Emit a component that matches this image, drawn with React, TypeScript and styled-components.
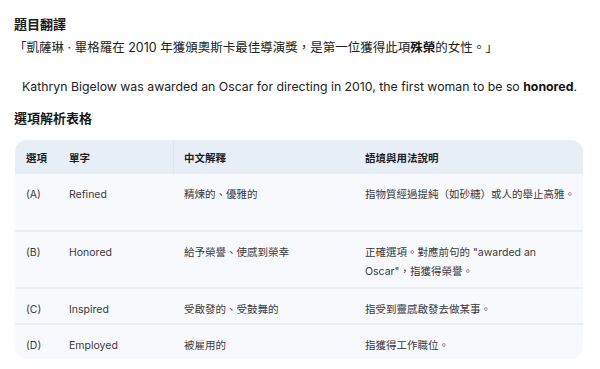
import React from "react";
import styled, { createGlobalStyle } from "styled-components";

const Global = createGlobalStyle`
  html, body { margin: 0; padding: 0; background: #ffffff; }
  body {
    font-family: Inter, "Noto Sans CJK TC", "Noto Sans", sans-serif;
    color: #1d1d1f;
    -webkit-font-smoothing: antialiased;
  }
`;

const Page = styled.div`
  width: 600px;
  height: 369px;
  box-sizing: border-box;
  padding: 15px 15px 0 14px;
  overflow: hidden;
`;

const Heading = styled.h3`
  margin: 0;
  font-size: 13px;
  line-height: 18px;
  font-weight: 700;
  color: #1a1a1a;
`;

const Para = styled.p<{ $indent?: number; $top?: number; $size: number }>`
  margin: ${(p) => p.$top ?? 0}px 0 0 ${(p) => p.$indent ?? 0}px;
  font-size: ${(p) => p.$size}px;
  line-height: 18px;
  color: #222;
  white-space: nowrap;
  b { font-weight: 700; color: #111; }
`;

const Spacer = styled.div<{ $h: number }>`
  height: ${(p) => p.$h}px;
`;

const Table = styled.div`
  margin-top: 13px;
  margin-left: 1px;
  width: 568px;
  border-radius: 12px;
  overflow: hidden;
  background: #f7f9fc;
  display: grid;
  grid-template-columns: 43px 115px 182px 228px;
  font-size: 10.5px;
  line-height: 19px;
  color: #3a3a3c;
`;

const HeadCell = styled.div<{ $divider?: boolean; $pl?: number }>`
  background: #e8eef6;
  height: 34px;
  box-sizing: border-box;
  display: flex;
  align-items: center;
  padding: 3px 0 0 ${(p) => p.$pl ?? 11}px;
  font-weight: 700;
  color: #1f1f1f;
  box-shadow: ${(p) => (p.$divider ? "inset 1px 0 0 #dfe6ef" : "none")};
`;

const Cell = styled.div<{ $h: number; $line?: boolean; $pl?: number }>`
  min-height: ${(p) => p.$h}px;
  box-sizing: border-box;
  padding: 11px 3px 0 ${(p) => p.$pl ?? 11}px;
  border-top: ${(p) => (p.$line ? "2px solid #eaedf1" : "none")};
`;

type Row = { opt: string; word: string; zh: string; note: string; h: number };

const rows: Row[] = [
  { opt: "(A)", word: "Refined", zh: "精煉的、優雅的", note: "指物質經過提純（如砂糖）或人的舉止高雅。", h: 56 },
  { opt: "(B)", word: "Honored", zh: "給予榮譽、使感到榮幸", note: "正確選項。對應前句的 \"awarded an Oscar\"，指獲得榮譽。", h: 57 },
  { opt: "(C)", word: "Inspired", zh: "受啟發的、受鼓舞的", note: "指受到靈感啟發去做某事。", h: 36 },
  { opt: "(D)", word: "Employed", zh: "被雇用的", note: "指獲得工作職位。", h: 36 },
];

export default function App() {
  return (
    <Page>
      <Global />
      <Heading>題目翻譯</Heading>
      <Para $top={6} $size={12.5}>「凱薩琳 · 畢格羅在 2010 年獲頒奧斯卡最佳導演獎，是第一位獲得此項<b>殊榮</b>的女性。」</Para>
      <Para $top={21} $indent={8} $size={12.3}>
        Kathryn Bigelow was awarded an Oscar for directing in 2010, the first woman to be so <b>honored</b>.
      </Para>
      <Spacer $h={13} />
      <Heading>選項解析表格</Heading>
      <Table>
        <HeadCell>選項</HeadCell>
        <HeadCell>單字</HeadCell>
        <HeadCell $divider>中文解釋</HeadCell>
        <HeadCell $pl={10}>語境與用法說明</HeadCell>
        {rows.map((r, i) => (
          <React.Fragment key={r.opt}>
            <Cell $h={r.h} $line={i > 0}>{r.opt}</Cell>
            <Cell $h={r.h} $line={i > 0}>{r.word}</Cell>
            <Cell $h={r.h} $line={i > 0}>{r.zh}</Cell>
            <Cell $h={r.h} $line={i > 0} $pl={10}>{r.note}</Cell>
          </React.Fragment>
        ))}
      </Table>
    </Page>
  );
}
